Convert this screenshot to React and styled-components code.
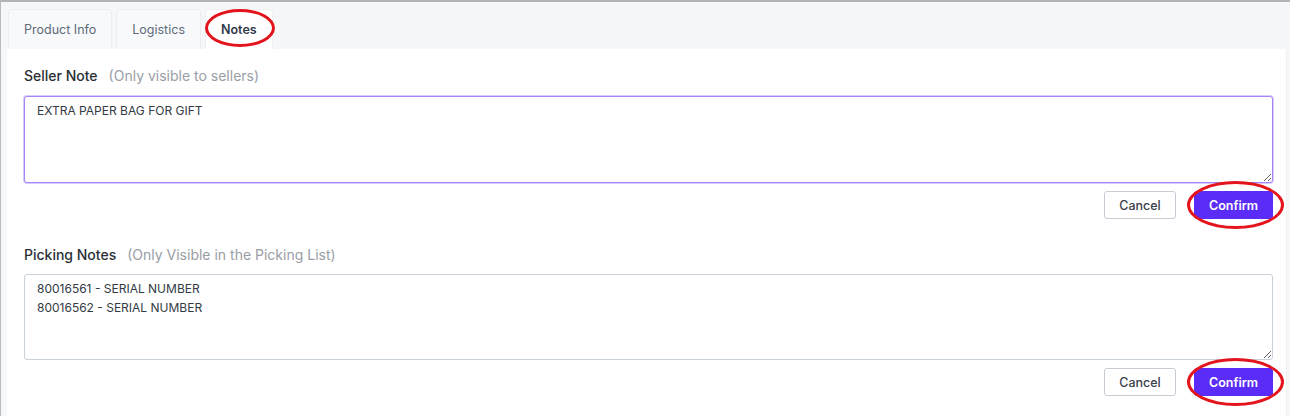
import React, { useState } from 'react';
import styled, { createGlobalStyle } from 'styled-components';

const GlobalStyle = createGlobalStyle`
  html, body {
    margin: 0;
    padding: 0;
    background: #ffffff;
  }
  body {
    font-family: Inter, "Noto Sans", "Liberation Sans", sans-serif;
    color: #333;
  }
`;

const Page = styled.div`
  height: 416px;
  box-sizing: border-box;
  border-top: 2px solid #b2b4b6;
  border-left: 1px solid #b8babc;
  background: #f6f7f9;
  display: flex;
  flex-direction: column;
  overflow: hidden;
`;

const TabBar = styled.div`
  display: flex;
  gap: 4px;
  padding: 7px 0 0 7px;
`;

const Tab = styled.div`
  position: relative;
  height: 40px;
  box-sizing: border-box;
  padding: 0 ${p => p.$pad}px;
  display: flex;
  align-items: center;
  font-size: 12.5px;
  font-weight: ${p => (p.$active ? 600 : 400)};
  color: ${p => (p.$active ? '#2f3a4a' : '#5f6b7a')};
  background: ${p => (p.$active ? '#ffffff' : '#f8f9fa')};
  border: 1px solid ${p => (p.$active ? '#eef0f2' : '#eceef0')};
  border-bottom: none;
  border-radius: 4px 4px 0 0;
`;

const Ring = styled.span`
  position: absolute;
  left: ${p => p.$l}px;
  top: ${p => p.$t}px;
  width: ${p => p.$w}px;
  height: ${p => p.$h}px;
  border: 3px solid #e3141c;
  border-radius: 50%;
  box-sizing: border-box;
  pointer-events: none;
`;

const Panel = styled.div`
  flex: 1;
  background: #ffffff;
  margin: 0 3px 0 6px;
  padding: 17px 13px 0 17px;
  border-right: 1px solid #eef0f2;
  display: flex;
  flex-direction: column;
`;

const Section = styled.div`
  display: flex;
  flex-direction: column;
  margin-bottom: ${p => p.$gap || 0}px;
`;

const Label = styled.div`
  font-size: 14px;
  line-height: 20px;
  font-weight: 500;
  color: #2b2f36;
  margin-bottom: ${p => p.$mb}px;
`;

const Hint = styled.span`
  font-weight: 400;
  color: #999ea6;
  margin-left: 11px;
`;

const NoteBox = styled.textarea`
  display: block;
  width: 100%;
  height: ${p => p.$h}px;
  box-sizing: border-box;
  resize: vertical;
  padding: 4px 12px;
  font-family: Inter, "Noto Sans", "Liberation Sans", sans-serif;
  font-size: 12px;
  line-height: 19px;
  color: #333a44;
  border: 1px solid ${p => (p.$focus ? '#a585f7' : '#c9d1da')};
  border-radius: 3px;
  box-shadow: ${p => (p.$focus ? '0 0 0 1px #d9cbfc' : 'none')};
  outline: none;
  background: #fff;
`;

const Actions = styled.div`
  display: flex;
  justify-content: flex-end;
  gap: 18px;
  margin-top: 8px;
`;

const Button = styled.button`
  position: relative;
  height: 28px;
  width: ${p => p.$w}px;
  box-sizing: border-box;
  border-radius: 3px;
  font-family: Inter, "Noto Sans", "Liberation Sans", sans-serif;
  font-size: 12.5px;
  font-weight: ${p => (p.$primary ? 600 : 500)};
  color: ${p => (p.$primary ? '#ffffff' : '#3a414b')};
  background: ${p => (p.$primary ? '#5b2bf7' : '#ffffff')};
  border: 1px solid ${p => (p.$primary ? '#5b2bf7' : '#c5ccd4')};
  cursor: pointer;
`;

function NoteSection({ title, hint, value, focus, gap, mb, ringTop }) {
  const [text, setText] = useState(value);
  return (
    <Section $gap={gap}>
      <Label $mb={mb}>
        {title}
        <Hint>{hint}</Hint>
      </Label>
      <NoteBox $h={focus ? 87 : 86} $focus={focus} value={text} onChange={e => setText(e.target.value)} />
      <Actions>
        <Button $w={72}>Cancel</Button>
        <Button $w={79} $primary>
          Confirm
          <Ring $l={-8} $t={ringTop} $w={97} $h={48} />
        </Button>
      </Actions>
    </Section>
  );
}

export default function App() {
  return (
    <>
      <GlobalStyle />
      <Page>
        <TabBar>
          <Tab $pad={15}>Product Info</Tab>
          <Tab $pad={15}>Logistics</Tab>
          <Tab $pad={15} $active>
            Notes
            <Ring $l={-1} $t={-1} $w={70} $h={38} />
          </Tab>
        </TabBar>
        <Panel>
          <NoteSection
            title="Seller Note"
            hint="(Only visible to sellers)"
            value="EXTRA PAPER BAG FOR GIFT"
            focus
            gap={26}
            mb={10}
            ringTop={-11}
          />
          <NoteSection
            title="Picking Notes"
            hint="(Only Visible in the Picking List)"
            value={'80016561 - SERIAL NUMBER\n80016562 - SERIAL NUMBER'}
            mb={9}
            ringTop={-11}
          />
        </Panel>
      </Page>
    </>
  );
}
